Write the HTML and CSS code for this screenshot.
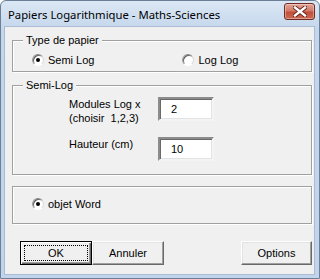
FILE: index.html
```html
<!DOCTYPE html>
<html lang="fr">
<head>
  <meta charset="UTF-8">
  <meta name="viewport" content="width=device-width, initial-scale=1.0">
  <title>Papiers Logarithmique - Maths-Sciences</title>
  <link rel="stylesheet" href="styles.css">
</head>
<body>

  <div class="window">
    <div class="titlebar">
      <span class="title">Papiers Logarithmique - Maths-Sciences</span>
      <button class="close" type="button" aria-label="Fermer">
        <svg width="14" height="11" viewBox="0 0 14 11">
          <path d="M2 1.5 L12 9.5 M12 1.5 L2 9.5" stroke="#5a1f16" stroke-width="4.2" stroke-linecap="square"/>
          <path d="M2 1.5 L12 9.5 M12 1.5 L2 9.5" stroke="#ffffff" stroke-width="2.4" stroke-linecap="square"/>
        </svg>
      </button>
    </div>

    <div class="content">
      <div class="group group-type">
        <span class="caption">Type de papier</span>
        <div class="radios">
          <label class="radio"><span class="dot checked"></span>Semi Log</label>
          <label class="radio radio-right"><span class="dot"></span>Log Log</label>
        </div>
      </div>

      <div class="group group-semi">
        <span class="caption">Semi-Log</span>
        <div class="fields">
          <div class="field-label">Modules Log x<br>(choisir&nbsp; 1,2,3)</div>
          <input class="field" type="text" value="2">
          <div class="field-label">Hauteur (cm)</div>
          <input class="field" type="text" value="10">
        </div>
      </div>

      <div class="group group-word">
        <label class="radio"><span class="dot checked"></span>objet Word</label>
      </div>

      <div class="buttons">
        <button class="btn default" type="button"><span>OK</span></button>
        <button class="btn" type="button"><span>Annuler</span></button>
        <button class="btn btn-options" type="button"><span>Options</span></button>
      </div>
    </div>
  </div>

</body>
</html>
```

FILE: styles.css
```css
body {
  margin: 0;
  padding: 0;
  font-family: "Liberation Sans", Arial, sans-serif;
  font-size: 11px;
  color: #000;
  background-color: #ffffff;
}

.window {
  width: 320px;
  height: 279px;
  box-sizing: border-box;
  border: 1px solid #6b7f97;
  border-radius: 6px 6px 0 0;
  background: linear-gradient(#dbe7f4, #c3d6ec 30px, #c1d4eb);
  padding: 0 4px 3px 3px;
  display: flex;
  flex-direction: column;
}

.titlebar {
  height: 25px;
  display: flex;
  align-items: center;
  justify-content: space-between;
  padding-left: 4px;
}

.title {
  font-family: "Noto Sans", sans-serif;
  font-size: 11.3px;
  color: #000;
  margin-top: 1px;
}

.close {
  width: 31px;
  height: 17px;
  margin-top: -4px;
  margin-right: 0;
  padding: 0;
  border: 1px solid #6e2c22;
  border-radius: 3px;
  background: linear-gradient(#e4a598, #d37a68 45%, #c24f38 55%, #cc6a55);
  box-shadow: inset 0 0 0 1px rgba(255, 255, 255, 0.35);
  display: flex;
  align-items: center;
  justify-content: center;
}

.content {
  flex: 1;
  background-color: #f0f0f0;
  border: 1px solid #a9bcd3;
  padding: 13px 2px 0 7px;
  display: flex;
  flex-direction: column;
}

.group {
  border: 1px solid #a0a0a0;
  box-sizing: border-box;
  box-shadow: inset 1px 1px 0 #fff, 1px 1px 0 #fff;
}

.caption {
  display: table;
  margin: -8px 0 0 10px;
  padding: 0 3px;
  line-height: 14px;
  background-color: #f0f0f0;
}

.group-type {
  height: 32px;
}

.radios {
  display: flex;
  margin-top: 6px;
  padding-left: 19px;
}

.radio {
  display: flex;
  align-items: center;
  height: 14px;
}

.radio-right {
  margin-left: 88px;
}

.dot {
  width: 12px;
  height: 12px;
  box-sizing: border-box;
  border-radius: 50%;
  border: 1px solid;
  border-color: #8a8a8a #d8d8d8 #ffffff #9a9a9a;
  background: #fff;
  box-shadow: inset 1px 1px 0 #5f5f5f;
  margin-right: 4px;
  display: flex;
  align-items: center;
  justify-content: center;
}

.dot.checked::after {
  content: "";
  width: 4px;
  height: 4px;
  border-radius: 50%;
  background: #000;
}

.group-semi {
  height: 90px;
  margin-top: 13px;
}

.fields {
  display: grid;
  grid-template-columns: 89px 56px;
  row-gap: 12px;
  margin-top: 5px;
  padding-left: 56px;
  line-height: 14px;
}

.field {
  width: 56px;
  height: 24px;
  box-sizing: border-box;
  margin: 0;
  padding: 0 0 0 11px;
  border: 2px solid;
  border-color: #8c8c8c #f4f4f4 #f4f4f4 #8c8c8c;
  box-shadow: inset 1px 1px 0 #696969, inset -1px -1px 0 #e3e3e3;
  background: #fff;
  font-family: "Liberation Sans", Arial, sans-serif;
  font-size: 11px;
  color: #000;
}

.group-word {
  height: 38px;
  margin-top: 11px;
  padding: 10px 0 0 19px;
}

.buttons {
  display: flex;
  margin-top: 17px;
  padding-left: 8px;
}

.btn {
  width: 72px;
  height: 24px;
  box-sizing: border-box;
  margin: 0;
  padding: 3px;
  background-color: #f0f0f0;
  border: 1px solid;
  border-color: #fff #696969 #696969 #fff;
  box-shadow: inset -1px -1px 0 #a0a0a0, inset 1px 1px 0 #e3e3e3;
  font-family: "Liberation Sans", Arial, sans-serif;
  font-size: 11px;
  color: #000;
  display: flex;
}

.btn span {
  flex: 1;
  display: flex;
  align-items: center;
  justify-content: center;
  border: 1px dotted transparent;
}

.btn.default {
  border-color: #000;
  box-shadow: inset 1px 1px 0 #fff, inset -1px -1px 0 #696969, inset -2px -2px 0 #a0a0a0;
}

.btn.default span {
  border-color: #000;
}

.btn-options {
  margin-left: auto;
  width: 71px;
}
```
